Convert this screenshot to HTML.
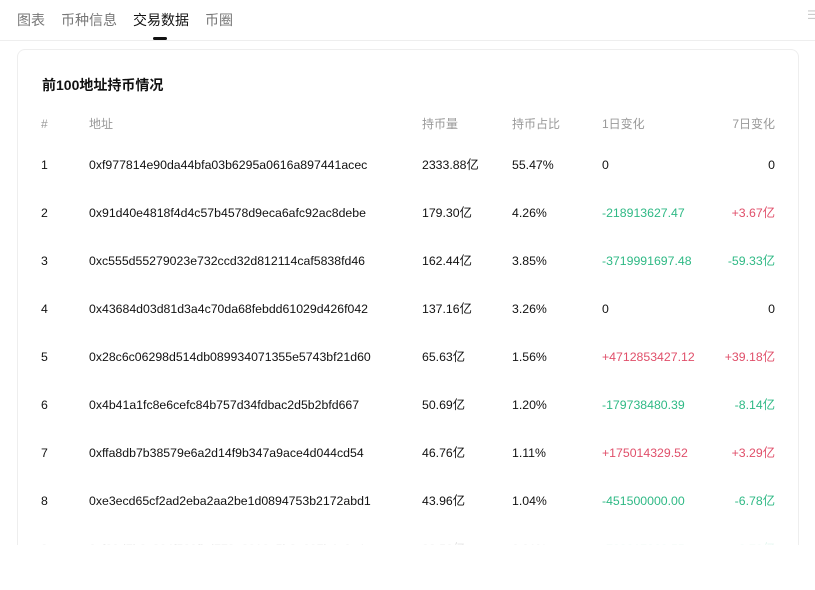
<!DOCTYPE html>
<html><head><meta charset="utf-8"><style>
*{margin:0;padding:0;box-sizing:border-box}
body{width:815px;height:590px;background:#fff;font-family:"Liberation Sans","Noto Sans CJK SC",sans-serif;position:relative;overflow:hidden;color:#111}
.tabs{position:absolute;top:0;left:0;width:815px;height:41px;border-bottom:1px solid #eee}
.tab{position:absolute;top:10px;font-size:14px;line-height:20px;color:#777}
.tab.act{color:#111}
.ind{position:absolute;left:153px;top:37px;width:14px;height:3px;background:#111;border-radius:2px}
.card{position:absolute;left:17px;top:49px;width:782px;height:496px;border:1px solid #eee;border-bottom:none;border-radius:8px 8px 0 0;overflow:hidden}
h3{position:absolute;left:24px;top:25px;font-size:14px;line-height:20px;font-weight:bold;color:#111}
.r{position:absolute;left:0;width:782px;height:16px;font-size:12.3px;line-height:16px}
.r span{position:absolute;top:0;white-space:nowrap;line-height:16px;height:16px}
.hd{color:#999;font-size:12px}
.g{color:#2fb985}.p{color:#e04f6a}
.fade{position:absolute;left:0;top:484px;width:782px;height:12px;background:linear-gradient(rgba(255,255,255,0.3),#fff)}
</style></head><body>
<div class="tabs">
<span class="tab" style="left:17px">图表</span>
<span class="tab" style="left:61px">币种信息</span>
<span class="tab act" style="left:133px">交易数据</span>
<span class="tab" style="left:205px">币圈</span>
<div class="ind"></div>
<span style="position:absolute;left:807px;top:8px;color:#ccc;font-size:12px">☰</span>
</div>
<div class="card">
<h3>前100地址持币情况</h3>
<div class="r hd" style="top:66px"><span style="left:23px">#</span><span style="left:71px">地址</span><span style="left:404px">持币量</span><span style="left:494px">持币占比</span><span style="left:584px">1日变化</span><span style="right:25px">7日变化</span></div>
<div class="r" style="top:107px"><span style="left:23px">1</span><span style="left:71px">0xf977814e90da44bfa03b6295a0616a897441acec</span><span style="left:404px">2333.88亿</span><span style="left:494px">55.47%</span><span style="left:584px">0</span><span style="right:25px">0</span></div>
<div class="r" style="top:155px"><span style="left:23px">2</span><span style="left:71px">0x91d40e4818f4d4c57b4578d9eca6afc92ac8debe</span><span style="left:404px">179.30亿</span><span style="left:494px">4.26%</span><span class="g" style="left:584px">-218913627.47</span><span class="p" style="right:25px">+3.67亿</span></div>
<div class="r" style="top:203px"><span style="left:23px">3</span><span style="left:71px">0xc555d55279023e732ccd32d812114caf5838fd46</span><span style="left:404px">162.44亿</span><span style="left:494px">3.85%</span><span class="g" style="left:584px">-3719991697.48</span><span class="g" style="right:25px">-59.33亿</span></div>
<div class="r" style="top:251px"><span style="left:23px">4</span><span style="left:71px">0x43684d03d81d3a4c70da68febdd61029d426f042</span><span style="left:404px">137.16亿</span><span style="left:494px">3.26%</span><span style="left:584px">0</span><span style="right:25px">0</span></div>
<div class="r" style="top:299px"><span style="left:23px">5</span><span style="left:71px">0x28c6c06298d514db089934071355e5743bf21d60</span><span style="left:404px">65.63亿</span><span style="left:494px">1.56%</span><span class="p" style="left:584px">+4712853427.12</span><span class="p" style="right:25px">+39.18亿</span></div>
<div class="r" style="top:347px"><span style="left:23px">6</span><span style="left:71px">0x4b41a1fc8e6cefc84b757d34fdbac2d5b2bfd667</span><span style="left:404px">50.69亿</span><span style="left:494px">1.20%</span><span class="g" style="left:584px">-179738480.39</span><span class="g" style="right:25px">-8.14亿</span></div>
<div class="r" style="top:395px"><span style="left:23px">7</span><span style="left:71px">0xffa8db7b38579e6a2d14f9b347a9ace4d044cd54</span><span style="left:404px">46.76亿</span><span style="left:494px">1.11%</span><span class="p" style="left:584px">+175014329.52</span><span class="p" style="right:25px">+3.29亿</span></div>
<div class="r" style="top:443px"><span style="left:23px">8</span><span style="left:71px">0xe3ecd65cf2ad2eba2aa2be1d0894753b2172abd1</span><span style="left:404px">43.96亿</span><span style="left:494px">1.04%</span><span class="g" style="left:584px">-451500000.00</span><span class="g" style="right:25px">-6.78亿</span></div>
<div class="r" style="top:491px"><span style="left:23px">9</span><span style="left:71px">0xf89d7b9c864f589fbd779e2016a5b2a097b4a0a4</span><span style="left:404px">38.56亿</span><span style="left:494px">0.91%</span><span class="g" style="left:584px">-723017960.55</span><span class="g" style="right:25px">-2.70亿</span></div>
<div class="fade"></div>
</div>
</body></html>
